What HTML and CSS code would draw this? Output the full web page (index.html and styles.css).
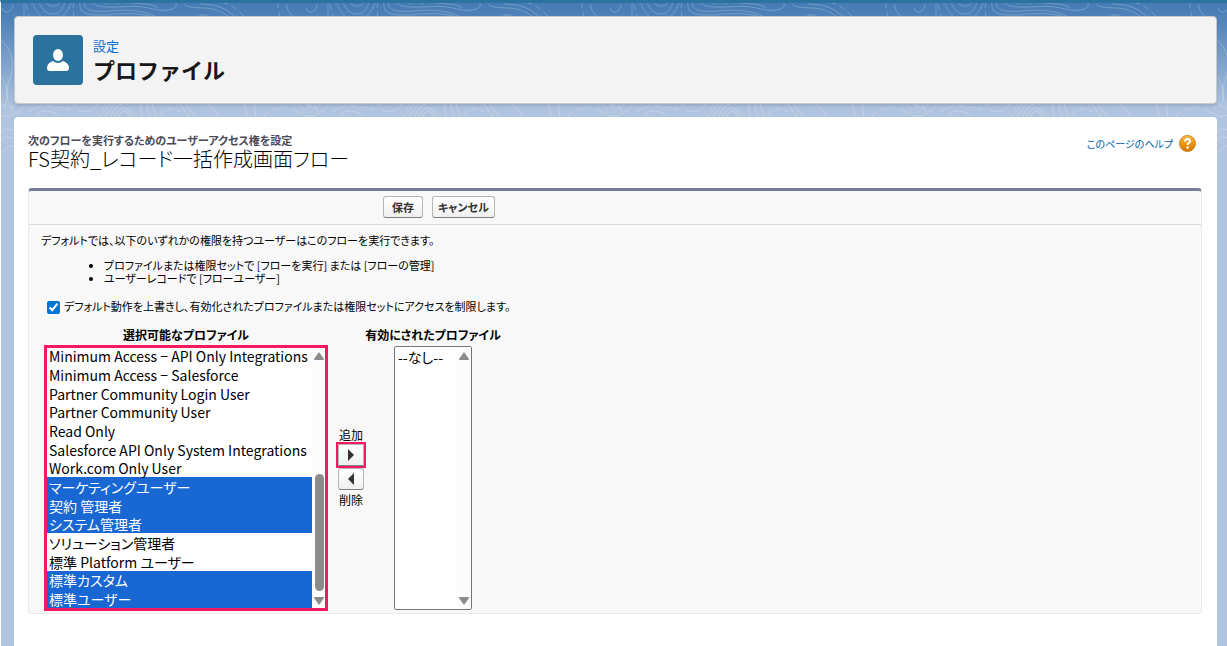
FILE: index.html
```html
<!DOCTYPE html>
<html lang="ja">
<head>
  <meta charset="UTF-8">
  <meta name="viewport" content="width=device-width, initial-scale=1.0">
  <title>プロファイル</title>
  <link rel="stylesheet" href="styles.css">
</head>
<body>
  <svg class="contours" aria-hidden="true">
    <defs>
      <pattern id="contour" width="304" height="220" patternUnits="userSpaceOnUse">
        <g fill="none" stroke="#fff" stroke-opacity="0.22">
          <path d="M24 0V16M32 0C36 14 42 20 52 20S68 12 72 0M38 0C42 10 46 14 53 14S62 10 66 0M44 0C48 8 58 8 62 0M2 8C4 14 12 14 13 4"/>
          <path d="M80 2C78 16 92 15 106 15C130 12 150 14 160 20M84 2C84 12 96 12 110 11C140 8 150 14 164 20M92 2C96 8 106 7 122 7C146 4 156 12 168 10S176 4 174 0M130 3C146 4 154 4 158 8"/>
          <path d="M184 4C190 10 206 6 216 10S228 16 232 20M200 4C216 4 228 8 238 20M196 20C200 12 208 14 212 20M286 4C288 12 292 16 296 20"/>
          <path stroke-dasharray="6 4" d="M26 4L30 20M74 2C72 10 74 14 74 20M278 2C278 10 278 14 282 20M222 2C234 6 242 12 246 20M104 3H126"/>
          <path d="M0 40C10 46 16 62 10 78S6 98 14 112M0 76C8 84 10 96 4 108"/>
          <path d="M2 104C8 108 14 112 16 100M0 116C12 118 18 112 24 106M36 116C42 108 54 110 60 118M74 104C78 114 92 114 98 104"/>
          <path d="M98 118L112 102M104 118L116 102M110 118Q116 104 122 104M114 118C118 104 130 106 134 118M118 118C122 108 128 110 130 118M140 102L142 118M146 102L150 118M152 102L156 118"/>
          <path d="M178 102L190 118M184 102L196 118M204 102Q216 108 218 118M244 102L248 118M254 102L256 118M294 108C298 116 312 116 316 106M300 106Q306 114 312 106"/>
          <path stroke-dasharray="6 4" d="M28 112C36 104 52 104 70 110M94 116L108 102M160 116Q166 104 180 112M264 116Q272 108 284 108"/>
          <path d="M0 132Q8 126 16 132M0 140Q8 134 16 140M0 154Q8 144 16 146M292 124Q298 128 304 126M290 132H304M290 140H304"/>
        </g>
      </pattern>
    </defs>
    <rect width="100%" height="180" fill="url(#contour)"/>
  </svg>

  <header class="page-header">
    <span class="header-icon">
      <svg width="22" height="22" viewBox="0 0 22 22" fill="#fff" aria-hidden="true">
        <ellipse cx="11" cy="6" rx="5" ry="6"/>
        <path d="M6 12Q11 16 16 12Q22 14 22 19Q22 22 19 22H3Q0 22 0 19Q0 14 6 12Z"/>
      </svg>
    </span>
    <div class="header-text">
      <a class="header-link" href="#">設定</a>
      <h1>プロファイル</h1>
    </div>
  </header>

  <main class="content">
    <div class="title-row">
      <div>
        <p class="page-type">次のフローを実行するためのユーザーアクセス権を設定</p>
        <h2>FS契約_レコード一括作成画面フロー</h2>
      </div>
      <a class="help" href="#">
        このページのヘルプ
        <svg width="17" height="17" viewBox="0 0 17 17" aria-hidden="true">
          <defs>
            <linearGradient id="orange" x2="0" y2="1">
              <stop offset="0" stop-color="#f9bd4d"/>
              <stop offset="0.5" stop-color="#ee9412"/>
              <stop offset="1" stop-color="#c9780a"/>
            </linearGradient>
          </defs>
          <circle cx="8.5" cy="8.5" r="8" fill="url(#orange)" stroke="#cf841c"/>
          <path d="M6 6.5C6 3 11.5 3.5 11 6.5C10.8 8 8.5 8 8.5 10" fill="none" stroke="#fff" stroke-width="2"/>
          <circle cx="8.5" cy="12.5" r="1.2" fill="#fff"/>
        </svg>
      </a>
    </div>

    <form class="panel">
      <div class="button-row">
        <button type="button" class="btn">保存</button>
        <button type="button" class="btn">キャンセル</button>
      </div>
      <div class="panel-body">
        <p>デフォルトでは、以下のいずれかの権限を持つユーザーはこのフローを実行できます。</p>
        <ul>
          <li>プロファイルまたは権限セットで [フローを実行] または [フローの管理]</li>
          <li>ユーザーレコードで [フローユーザー]</li>
        </ul>
        <label class="override">
          <input type="checkbox" checked>
          デフォルト動作を上書きし、有効化されたプロファイルまたは権限セットにアクセスを制限します。
        </label>

        <div class="picker">
          <div class="picker-col available">
            <label for="available">選択可能なプロファイル</label>
            <div class="list">
              <select id="available" multiple>
                <option>Analytics Cloud Integration User</option>
                <option>Analytics Cloud Security User</option>
                <option>Chatter External User</option>
                <option>Chatter Free User</option>
                <option>Chatter Moderator User</option>
                <option>Contract Manager</option>
                <option>Cross Org Data Proxy User</option>
                <option>Customer Community Login User</option>
                <option>Customer Community User</option>
                <option>Customer Portal Manager</option>
                <option>External Identity User</option>
                <option>Force.com - Free User</option>
                <option>Identity User</option>
                <option>Marketing User</option>
                <option>Minimum Access − API Only Integrations</option>
                <option>Minimum Access − Salesforce</option>
                <option>Partner Community Login User</option>
                <option>Partner Community User</option>
                <option>Read Only</option>
                <option>Salesforce API Only System Integrations</option>
                <option>Work.com Only User</option>
                <option selected>マーケティングユーザー</option>
                <option selected>契約 管理者</option>
                <option selected>システム管理者</option>
                <option>ソリューション管理者</option>
                <option>標準 Platform ユーザー</option>
                <option selected>標準カスタム</option>
                <option selected>標準ユーザー</option>
              </select>
              <div class="scrollbar" aria-hidden="true">
                <svg width="10" height="8" viewBox="0 0 10 8"><path d="M5 0L10 7Q10 8 9 8H1Q0 8 0 7Z"/></svg>
                <span class="thumb"></span>
                <svg width="10" height="8" viewBox="0 0 10 8"><path d="M5 8L0 1Q0 0 1 0H9Q10 0 10 1Z"/></svg>
              </div>
            </div>
          </div>
          <div class="move">
            <span>追加</span>
            <button type="button" class="btn arrow add" aria-label="追加">
              <svg width="6" height="12" viewBox="0 0 6 12" aria-hidden="true"><path d="M0 0L6 6L0 12Z" fill="#333"/></svg>
            </button>
            <button type="button" class="btn arrow" aria-label="削除">
              <svg width="6" height="12" viewBox="0 0 6 12" aria-hidden="true"><path d="M6 0L0 6L6 12Z" fill="#333"/></svg>
            </button>
            <span>削除</span>
          </div>
          <div class="picker-col enabled">
            <label for="enabled">有効にされたプロファイル</label>
            <div class="list">
              <select id="enabled" multiple>
                <option>--なし--</option>
              </select>
              <div class="scrollbar" aria-hidden="true">
                <svg width="10" height="8" viewBox="0 0 10 8"><path d="M5 0L10 7Q10 8 9 8H1Q0 8 0 7Z"/></svg>
                <svg width="10" height="8" viewBox="0 0 10 8"><path d="M5 8L0 1Q0 0 1 0H9Q10 0 10 1Z"/></svg>
              </div>
            </div>
          </div>
        </div>
      </div>
    </form>
  </main>

  <script>
    const available = document.getElementById("available");
    available.scrollTop = available.scrollHeight;
  </script>
</body>
</html>
```
FILE: styles.css
```css
* {
  box-sizing: border-box;
}

body {
  margin: 0;
  min-height: 100vh;
  padding: 13px 10px 0 13px;
  display: flex;
  flex-direction: column;
  gap: 13px;
  border-top: 3px solid #2a739e;
  border-left: 1px solid #fff;
  background: linear-gradient(#4479b2 0, #5083b9 20px, #b0c4df 110px, #b0c4df 100%) #b0c4df;
  font-family: "Noto Sans CJK JP", sans-serif;
  font-feature-settings: "palt";
  font-size: 11px;
  color: #000;
}

h1, h2, p {
  margin: 0;
}

a {
  text-decoration: none;
}

.contours {
  position: absolute;
  top: 0;
  left: 0;
  width: 100%;
  height: 180px;
  z-index: -1;
}

.page-header {
  display: flex;
  align-items: center;
  gap: 10px;
  height: 88px;
  padding: 0 18px;
  background: #f3f3f3;
  border: 1px solid #c9c9c9;
  border-radius: 4px;
  box-shadow: 0 2px 2px rgba(0, 0, 0, 0.1);
}

.header-icon {
  display: flex;
  align-items: center;
  justify-content: center;
  width: 50px;
  height: 50px;
  border-radius: 4px;
  background: #2a739e;
}

.header-text {
  padding-bottom: 3px;
  font-feature-settings: normal;
}

.header-link {
  display: block;
  font-size: 13px;
  line-height: 20px;
  color: #0b6fcc;
}

h1 {
  font-size: 22px;
  line-height: 26px;
  color: #181818;
}

.content {
  flex: 1;
  padding: 16px 15px 32px 14px;
  background: #fff;
  border-radius: 4px 4px 0 0;
}

.title-row {
  display: flex;
  justify-content: space-between;
  margin-bottom: 17px;
}

.page-type {
  font-weight: bold;
  line-height: 14px;
  color: #4a4a56;
}

h2 {
  font-size: 20px;
  font-weight: 300;
  line-height: 24px;
}

.help {
  display: flex;
  align-items: center;
  gap: 6px;
  height: 20px;
  padding-right: 6px;
  font-size: 10px;
  color: #015ba7;
}

.panel {
  background: #f8f8f8;
  border: 1px solid #eaeaea;
  border-top: 3px solid #747e96;
  border-radius: 4px;
}

.button-row {
  display: flex;
  gap: 9px;
  padding: 5px 0 6px 354px;
  border-bottom: 1px solid #dbdbdb;
}

.btn {
  min-width: 40px;
  height: 22px;
  padding: 0 5px;
  border: 1px solid #b5b5b5;
  border-bottom-color: #7f7f7f;
  border-radius: 3px;
  background: linear-gradient(#fff, #f0f0f0);
  font-family: inherit;
  font-feature-settings: inherit;
  font-size: 11px;
  font-weight: bold;
  line-height: 18px;
  color: #333;
}

.panel-body {
  padding: 7px 12px 3px;
}

.panel-body p {
  line-height: 16px;
}

ul {
  margin: 11px 0 12px;
  padding-left: 63px;
}

li {
  line-height: 13px;
}

.override {
  display: flex;
  align-items: center;
  gap: 4px;
  line-height: 18px;
}

.override input {
  width: 13px;
  height: 13px;
  margin: 2px 0 0 6px;
  accent-color: #0075d6;
}

.picker {
  display: flex;
  margin: 10px 0 0 4px;
}

.picker-col {
  display: flex;
  flex-direction: column;
  align-items: center;
  gap: 1px;
}

.picker-col label {
  font-size: 12px;
  font-weight: bold;
  line-height: 20px;
  white-space: nowrap;
}

.list {
  display: flex;
  width: 100%;
  height: 264px;
  border: 1px solid #767676;
  border-radius: 2px;
  background: #fff;
}

.list select {
  flex: 1;
  min-width: 0;
  height: 100%;
  padding: 0;
  border: 0;
  outline: 0;
  background: #fff;
  font-family: inherit;
  font-feature-settings: inherit;
  font-size: 14px;
  scrollbar-width: none;
}

.list option {
  display: flex;
  align-items: center;
  height: 19px;
  min-height: 0;
  padding: 0 3px;
}

.list option:nth-child(3n) {
  height: 18px;
}

.list option:checked {
  background: #1967d2 linear-gradient(#1967d2, #1967d2);
  color: #fff;
}

.scrollbar {
  display: flex;
  flex-direction: column;
  align-items: center;
  justify-content: space-between;
  width: 14px;
  padding: 5px 0 4px;
  background: #fcfcfc;
  fill: #8b8b8b;
}

.thumb {
  width: 9px;
  height: 117px;
  margin: auto 0 6px;
  border-radius: 5px;
  background: #8b8b8b;
}

.available {
  width: 282px;
}

.available .list {
  border-radius: 0;
  outline: 3px solid #f5195f;
  outline-offset: -2px;
}

.enabled {
  width: 78px;
  margin-left: 19px;
}

.move {
  display: flex;
  flex-direction: column;
  align-items: center;
  align-self: center;
  gap: 2px;
  width: 48px;
  padding-bottom: 2px;
  font-size: 12px;
  line-height: 15px;
}

.arrow {
  display: flex;
  align-items: center;
  justify-content: center;
  width: 26px;
  min-width: 0;
  padding: 0;
}

.add {
  border-radius: 0;
  outline: 2px solid #f5195f;
}
```
